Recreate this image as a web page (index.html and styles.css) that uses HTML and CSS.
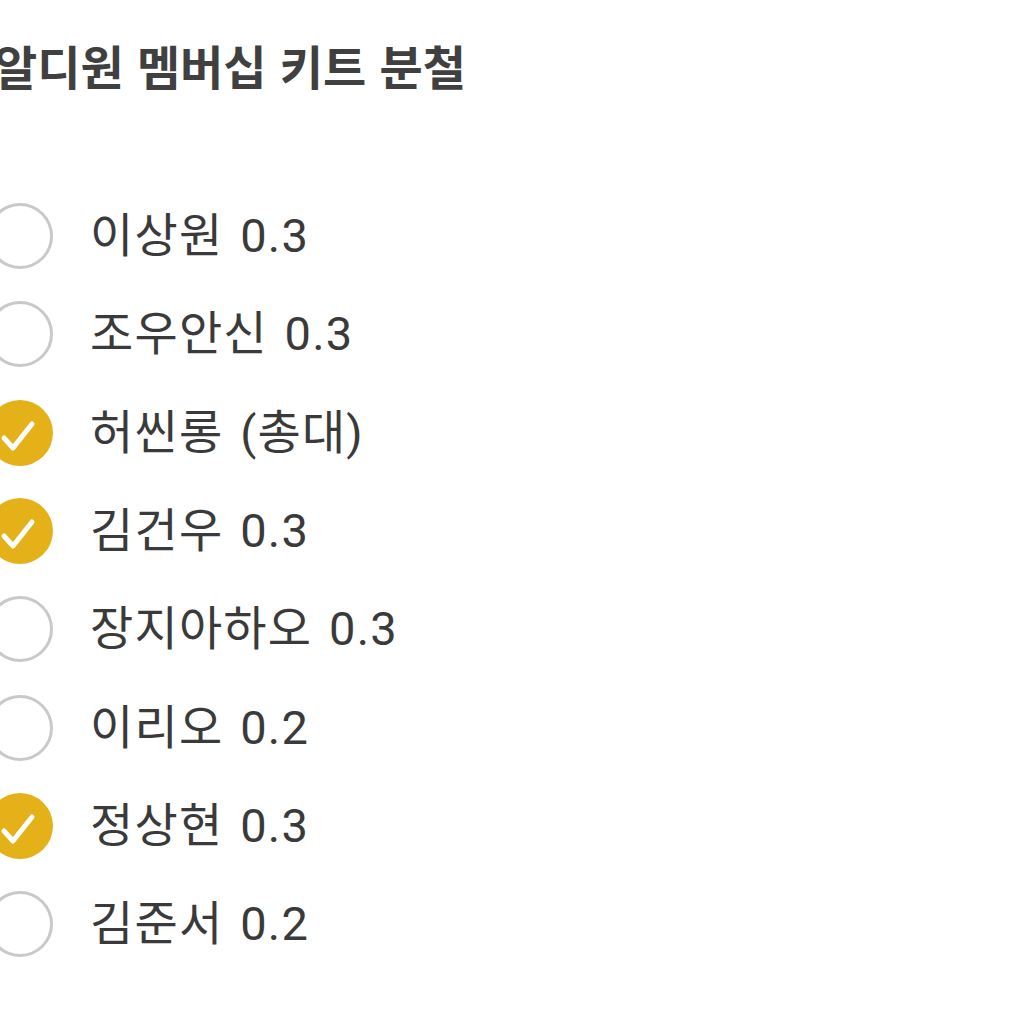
FILE: index.html
```html
<!DOCTYPE html>
<html lang="ko">
<head>
<meta charset="utf-8">
<link rel="stylesheet" href="styles.css">
</head>
<body>
<div class="page">
  <h1 class="title">알디원 멤버십 키트 분철</h1>
  <ul class="options">
    <li class="option"><span class="mark"></span><span class="label">이상원 0.3</span></li>
    <li class="option"><span class="mark"></span><span class="label">조우안신 0.3</span></li>
    <li class="option checked"><span class="mark"><svg viewBox="0 0 66 66" width="66" height="66"><path d="M17 38 L26 48 L45 24" fill="none" stroke="#fff" stroke-width="5" stroke-linecap="round" stroke-linejoin="round"/></svg></span><span class="label">허씬롱 (총대)</span></li>
    <li class="option checked"><span class="mark"><svg viewBox="0 0 66 66" width="66" height="66"><path d="M17 38 L26 48 L45 24" fill="none" stroke="#fff" stroke-width="5" stroke-linecap="round" stroke-linejoin="round"/></svg></span><span class="label">김건우 0.3</span></li>
    <li class="option"><span class="mark"></span><span class="label">장지아하오 0.3</span></li>
    <li class="option"><span class="mark"></span><span class="label">이리오 0.2</span></li>
    <li class="option checked"><span class="mark"><svg viewBox="0 0 66 66" width="66" height="66"><path d="M17 38 L26 48 L45 24" fill="none" stroke="#fff" stroke-width="5" stroke-linecap="round" stroke-linejoin="round"/></svg></span><span class="label">정상현 0.3</span></li>
    <li class="option"><span class="mark"></span><span class="label">김준서 0.2</span></li>
  </ul>
</div>
</body>
</html>
```

FILE: styles.css
```css
html, body {
  margin: 0;
  padding: 0;
  background: #ffffff;
}
body {
  font-family: "Noto Sans CJK KR", "Noto Sans", sans-serif;
  color: #3c3c3c;
  overflow: hidden;
}
.page {
  margin-left: -13px;
  padding-top: 37px;
}
.title {
  margin: 0 0 0 7px;
  font-size: 47px;
  line-height: 56px;
  font-weight: 700;
  color: #404040;
  white-space: nowrap;
}
.options {
  list-style: none;
  margin: 94px 0 0 0;
  padding: 0;
}
.option {
  display: flex;
  align-items: center;
  height: 98.3px;
}
.mark {
  box-sizing: border-box;
  width: 66px;
  height: 66px;
  border-radius: 50%;
  border: 3.3px solid #c9c9c9;
  flex: none;
  display: flex;
  align-items: center;
  justify-content: center;
}
.mark svg {
  display: block;
  flex: none;
}
.option.checked .mark {
  border: none;
  background: #e5b119;
}
.label {
  margin-left: 37px;
  font-family: Roboto, "Noto Sans CJK KR", sans-serif;
  font-size: 47px;
  line-height: 56px;
  font-weight: 400;
  color: #3a3a3a;
  letter-spacing: 1.2px;
  word-spacing: 4px;
  white-space: nowrap;
}
```
